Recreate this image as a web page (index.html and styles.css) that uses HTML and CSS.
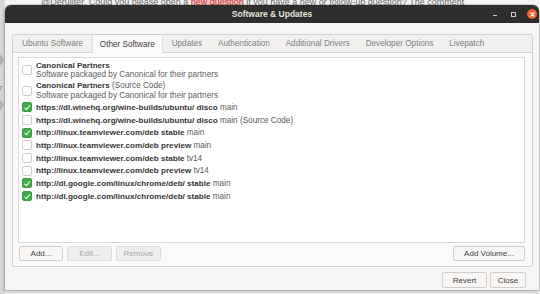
FILE: index.html
```html
<!DOCTYPE html>
<html>
<head>
<meta charset="utf-8">
<link rel="stylesheet" href="styles.css">
</head>
<body>
<div class="desktop">
  <div class="behind">@Deruijter. Could you please open a <span class="link">new question</span> if you have a new or follow-up question? The comment</div>
  <div class="side-marks">
    <span class="mark m1"></span>
    <span class="mark-num">7</span>
    <span class="mark m2"></span>
  </div>

  <div class="window">
    <div class="titlebar">
      <span class="title">Software &amp; Updates</span>
      <div class="controls">
        <span class="ctl-min"></span>
        <span class="ctl-max"></span>
        <span class="ctl-close">
          <svg width="9" height="9" viewBox="0 0 9 9"><path d="M2.8 2.8 L6.2 6.2 M6.2 2.8 L2.8 6.2" stroke="#fff" stroke-width="1.2" stroke-linecap="round"/></svg>
        </span>
      </div>
    </div>

    <div class="content">
      <div class="notebook">
        <div class="tabs">
          <span class="tab">Ubuntu Software</span>
          <span class="tab active">Other Software</span>
          <span class="tab">Updates</span>
          <span class="tab">Authentication</span>
          <span class="tab">Additional Drivers</span>
          <span class="tab">Developer Options</span>
          <span class="tab">Livepatch</span>
        </div>
        <div class="page">
          <div class="list">
            <div class="row two">
              <span class="cb"></span>
              <div class="lines">
                <div class="b">Canonical Partners</div>
                <div class="r">Software packaged by Canonical for their partners</div>
              </div>
            </div>
            <div class="row two">
              <span class="cb"></span>
              <div class="lines">
                <div><span class="b">Canonical Partners</span> <span class="r">(Source Code)</span></div>
                <div class="r">Software packaged by Canonical for their partners</div>
              </div>
            </div>
            <div class="row"><span class="cb on"></span><span class="b">https://dl.winehq.org/wine-builds/ubuntu/ disco</span>&nbsp;<span class="r">main</span></div>
            <div class="row"><span class="cb"></span><span class="b">https://dl.winehq.org/wine-builds/ubuntu/ disco</span>&nbsp;<span class="r">main (Source Code)</span></div>
            <div class="row"><span class="cb on"></span><span class="b">http://linux.teamviewer.com/deb stable</span>&nbsp;<span class="r">main</span></div>
            <div class="row"><span class="cb"></span><span class="b">http://linux.teamviewer.com/deb preview</span>&nbsp;<span class="r">main</span></div>
            <div class="row"><span class="cb"></span><span class="b">http://linux.teamviewer.com/deb stable</span>&nbsp;<span class="r">tv14</span></div>
            <div class="row"><span class="cb"></span><span class="b">http://linux.teamviewer.com/deb preview</span>&nbsp;<span class="r">tv14</span></div>
            <div class="row"><span class="cb on"></span><span class="b">http://dl.google.com/linux/chrome/deb/ stable</span>&nbsp;<span class="r">main</span></div>
            <div class="row"><span class="cb on"></span><span class="b">http://dl.google.com/linux/chrome/deb/ stable</span>&nbsp;<span class="r">main</span></div>
          </div>
          <div class="list-actions">
            <span class="btn w-add">Add...</span>
            <span class="btn dis w-edit">Edit...</span>
            <span class="btn dis w-rem">Remove</span>
            <span class="spacer"></span>
            <span class="btn w-vol">Add Volume...</span>
          </div>
        </div>
      </div>
      <div class="dialog-actions">
        <span class="btn w-rev">Revert</span>
        <span class="btn w-close">Close</span>
      </div>
    </div>
  </div>
</div>
</body>
</html>
```

FILE: styles.css
```css
html, body {
  margin: 0;
  padding: 0;
}
body {
  width: 540px;
  height: 294px;
  overflow: hidden;
  background: #e4e4e4;
  font-family: "Liberation Sans", "DejaVu Sans", sans-serif;
}
.desktop {
  position: relative;
  width: 540px;
  height: 294px;
  background: linear-gradient(to right, #d8d8d8 0 5px, #f4f4f4 5px);
}
.behind {
  height: 5px;
  overflow: hidden;
  padding-left: 41px;
  font-size: 9px;
  line-height: 5px;
  color: #6a6a6a;
  white-space: nowrap;
}
.behind .link {
  color: #c0392b;
  background: #f3c6c6;
  text-decoration: underline;
}
.side-marks {
  position: absolute;
  left: 0;
  top: 50px;
  width: 5px;
}
.mark {
  display: block;
  width: 0;
  height: 0;
  border-left: 4px solid #b4b4b4;
  border-top: 6px solid transparent;
  border-bottom: 6px solid transparent;
}
.m1 { margin-top: 4px; }
.mark-num {
  display: block;
  font-size: 8px;
  color: #777;
  margin: 18px 0 6px -2px;
}
.window {
  position: absolute;
  left: 5px;
  top: 5px;
  width: 534px;
  height: 285px;
  background: #f6f5f4;
  border-radius: 6px 6px 0 0;
  box-shadow: 0 0 0 1px rgba(0,0,0,0.12), 0 2px 4px rgba(0,0,0,0.25);
  display: flex;
  flex-direction: column;
  overflow: hidden;
}
.titlebar {
  position: relative;
  height: 18px;
  flex: none;
  background: #2e2e2e;
  display: flex;
  align-items: center;
  justify-content: center;
}
.title {
  color: #e4e1db;
  font-weight: bold;
  font-size: 8.5px;
}
.controls {
  position: absolute;
  right: 2px;
  top: 0;
  height: 18px;
  display: flex;
  align-items: center;
}
.ctl-min {
  width: 4px;
  height: 1px;
  background: #cfcfcf;
  margin-top: 3px;
  margin-right: 14px;
}
.ctl-max {
  width: 3px;
  height: 3px;
  border: 1px solid #cfcfcf;
  margin-right: 11px;
}
.ctl-close {
  width: 10px;
  height: 10px;
  border-radius: 50%;
  background: #e9622e;
  display: flex;
  align-items: center;
  justify-content: center;
}
.ctl-close svg { display: block; }
.content {
  flex: 1;
  display: flex;
  flex-direction: column;
  padding: 11px 6px 0 7px;
}
.notebook {
  border: 1px solid #d5d0cc;
  border-radius: 2px;
  background: #fafafa;
  display: flex;
  flex-direction: column;
}
.tabs {
  display: flex;
  height: 17px;
  background: #f1f0ef;
  border-bottom: 1px solid #d5d0cc;
  padding-left: 2px;
}
.tab {
  display: flex;
  align-items: center;
  padding: 0 7px;
  margin-right: 1.8px;
  font-size: 8.2px;
  color: #7e7e7e;
  white-space: nowrap;
}
.tab.active {
  background: #fafafa;
  color: #3d3d3d;
  margin-bottom: -1px;
  border-left: 1px solid #e2dfdc;
  border-right: 1px solid #e2dfdc;
}
.page {
  padding: 4px 7px 5px 5px;
  display: flex;
  flex-direction: column;
}
.list {
  height: 182px;
  background: #ffffff;
  border: 1px solid #dcd8d4;
  padding-top: 2px;
  box-sizing: content-box;
}
.row {
  height: 12.7px;
  display: flex;
  align-items: center;
  padding-left: 3px;
  font-size: 8px;
  white-space: nowrap;
}
.row.two {
  height: 20.5px;
}
.lines {
  display: flex;
  flex-direction: column;
  line-height: 9.5px;
}
.b {
  font-weight: bold;
  font-size: 8.1px;
  color: #363636;
}
.r {
  font-size: 8.2px;
  color: #5c5c5c;
}
.cb {
  flex: none;
  width: 8px;
  height: 8px;
  border: 1px solid #d2ccc7;
  border-radius: 2px;
  background: #fff;
  margin-right: 4px;
  position: relative;
}
.cb.on {
  background: #3fac4c;
  border-color: #3a9d45;
}
.cb.on::after {
  content: "";
  position: absolute;
  left: 2.5px;
  top: 0.5px;
  width: 2px;
  height: 4.5px;
  border-right: 1.3px solid #fff;
  border-bottom: 1.3px solid #fff;
  transform: rotate(40deg);
}
.list-actions {
  display: flex;
  gap: 4px;
  margin-top: 3px;
}
.spacer { flex: 1; }
.btn {
  height: 15px;
  box-sizing: border-box;
  border: 1px solid #d3cec9;
  border-radius: 2px;
  background: #f8f7f6;
  color: #3d3d3d;
  font-size: 8px;
  display: flex;
  align-items: center;
  justify-content: center;
}
.btn.dis {
  background: #efeeed;
  border-color: #e0dcd8;
  color: #a9a9a9;
}
.w-add { width: 44px; margin-left: 1px; }
.w-edit { width: 45px; }
.w-rem { width: 45px; }
.w-vol { width: 72px; }
.dialog-actions {
  display: flex;
  justify-content: flex-end;
  gap: 3px;
  margin-top: 5px;
  padding-right: 7px;
}
.w-rev { width: 45px; height: 16px; }
.w-close { width: 36px; height: 16px; }
```
